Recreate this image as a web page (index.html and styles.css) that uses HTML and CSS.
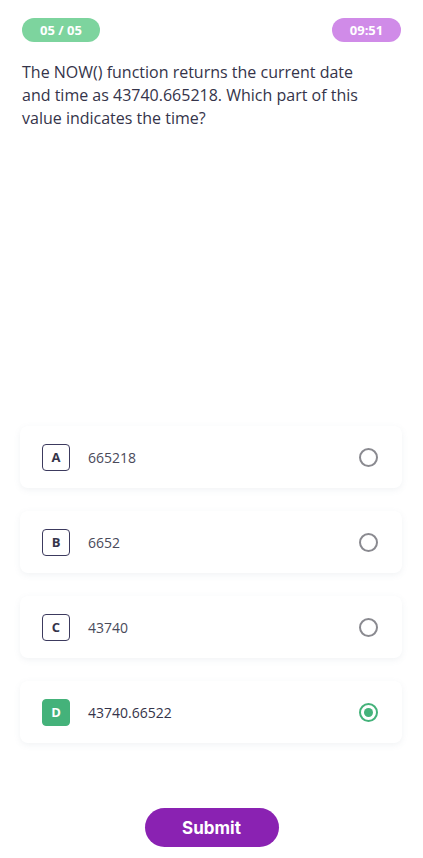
FILE: index.html
```html
<!DOCTYPE html>
<html>
<head>
<meta charset="utf-8">
<link rel="stylesheet" href="styles.css">
</head>
<body>
<div class="page">
  <div class="top">
    <span class="badge badge-count">05 / 05</span>
    <span class="badge badge-time">09:51</span>
  </div>
  <p class="question">The NOW() function returns the current date and time as 43740.665218. Which part of this value indicates the time?</p>
  <div class="options">
    <div class="option">
      <span class="letter">A</span>
      <span class="text">665218</span>
      <span class="radio"></span>
    </div>
    <div class="option">
      <span class="letter">B</span>
      <span class="text">6652</span>
      <span class="radio"></span>
    </div>
    <div class="option">
      <span class="letter">C</span>
      <span class="text">43740</span>
      <span class="radio"></span>
    </div>
    <div class="option selected">
      <span class="letter">D</span>
      <span class="text">43740.66522</span>
      <span class="radio"></span>
    </div>
  </div>
  <div class="footer">
    <button class="submit">Submit</button>
  </div>
</div>
</body>
</html>
```
FILE: styles.css
```css
* { box-sizing: border-box; }
html, body { margin: 0; padding: 0; background: #fff; }
body { font-family: "Open Sans", "Noto Sans", sans-serif; color: #35344a; }
.page { width: 423px; height: 858px; display: flex; flex-direction: column; padding: 18px 22px 0 22px; }
.top { display: flex; justify-content: space-between; }
.badge { height: 24px; border-radius: 12px; color: #fff; font-weight: 700; font-size: 13px; display: flex; align-items: center; justify-content: center; }
.badge-count { width: 78px; background: #7dd49e; }
.badge-time { width: 69px; background: #d08be8; }
.question { margin: 19px 0 0 0; font-size: 16px; line-height: 23px; color: #35344a; width: 340px; }
.options { margin-top: 296px; margin-left: -2px; margin-right: -1px; display: flex; flex-direction: column; gap: 23px; }
.option { height: 62px; border-radius: 8px; background: #fff; box-shadow: 0 2px 6px rgba(120, 140, 160, 0.10); display: flex; align-items: center; padding: 0 24px 0 22px; }
.letter { width: 28px; height: 27px; border: 1px solid #3c3a5e; border-radius: 4px; display: flex; align-items: center; justify-content: center; font-size: 13px; font-weight: 700; color: #35344a; }
.text { flex: 1; margin-left: 18px; font-size: 14px; color: #4a4a5a; }
.radio { width: 19px; height: 19px; border: 2px solid #8a8a90; border-radius: 50%; display: flex; align-items: center; justify-content: center; }
.selected .letter { background: #44b27a; border-color: #44b27a; color: #fff; }
.selected .text { color: #35344a; }
.selected .radio { border-color: #44b27a; }
.selected .radio::after { content: ""; width: 9px; height: 9px; border-radius: 50%; background: #44b27a; }
.footer { display: flex; justify-content: center; margin-top: 65px; }
.submit { width: 134px; height: 39px; border: none; border-radius: 20px; background: #8a22b2; color: #fff; font-family: "Inter", "Liberation Sans", sans-serif; font-weight: 700; font-size: 17px; }
```
